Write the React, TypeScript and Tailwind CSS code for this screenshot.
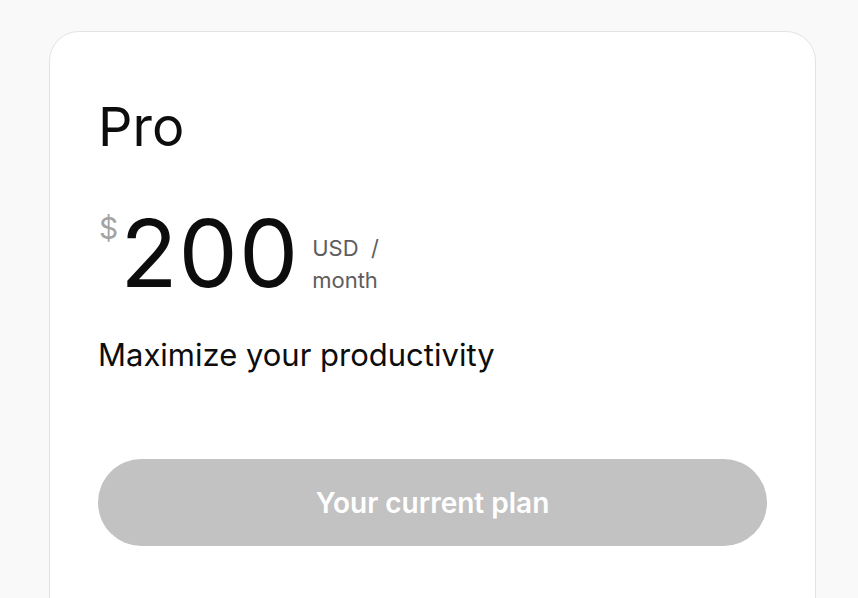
export default function App() {
  return (
    <div
      className="min-h-screen bg-[#f9f9f9] pt-[31px] pl-[49px] overflow-hidden"
      style={{ fontFamily: "Inter, 'Noto Sans', sans-serif" }}
    >
      <div className="w-[767px] h-[600px] bg-white border border-[#e3e3e3] rounded-[30px] px-[48px] pt-[68px] text-[#0d0d0d]">
        <h2 className="text-[54px] leading-none font-normal">Pro</h2>

        <div className="flex mt-[52px]">
          <span className="text-[30px] leading-none text-[#a3a3a3] mt-[7px] ml-[1px]">$</span>
          <span className="text-[94px] leading-none tracking-[1px] ml-[2px]">200</span>
          <div className="text-[22px] leading-[32px] text-[#5d5d5d] ml-[13px] mt-[26px]">
            <div>USD&nbsp; /</div>
            <div>month</div>
          </div>
        </div>

        <p className="text-[31px] leading-[42px] mt-[34px]">Maximize your productivity</p>

        <button className="mt-[83px] w-full h-[87px] rounded-full bg-[#c2c2c2] text-white text-[28px] font-semibold">
          Your current plan
        </button>
      </div>
    </div>
  );
}
